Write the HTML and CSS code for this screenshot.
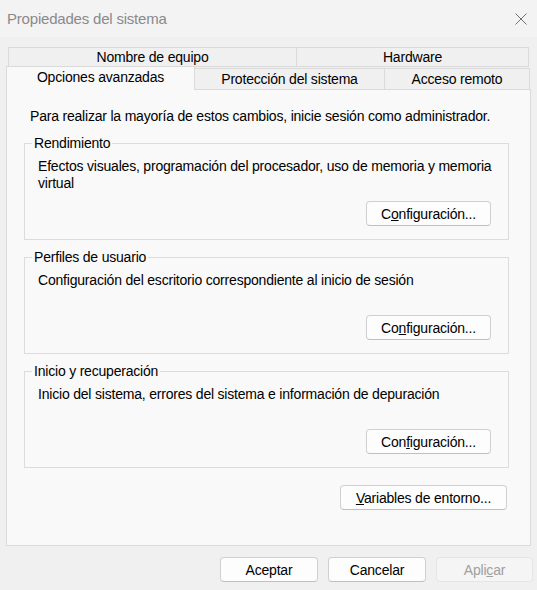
FILE: index.html
```html
<!DOCTYPE html>
<html lang="es">
<head>
<meta charset="utf-8">
<title>Propiedades del sistema</title>
<link rel="stylesheet" href="styles.css">
</head>
<body>
<div class="window">
  <div class="titlebar">
    <span class="title">Propiedades del sistema</span>
    <svg class="close" width="12" height="12" viewBox="0 0 12 12"><path d="M0.5 0.5 L11.5 11.5 M11.5 0.5 L0.5 11.5" stroke="#707070" stroke-width="1" fill="none"/></svg>
  </div>
  <div class="tabs">
    <div class="tabrow back">
      <div class="tab t-name">Nombre de equipo</div>
      <div class="tab t-hw">Hardware</div>
    </div>
    <div class="tabrow front">
      <div class="tab sel">Opciones avanzadas</div>
      <div class="tab t-prot">Protección del sistema</div>
      <div class="tab t-rem">Acceso remoto</div>
    </div>
  </div>
  <div class="panel">
    <p class="note">Para realizar la mayoría de estos cambios, inicie sesión como administrador.</p>
    <div class="group">
      <span class="legend">Rendimiento</span>
      <p class="gtext">Efectos visuales, programación del procesador, uso de memoria y memoria virtual</p>
      <button class="btn btn-cfg">C<u>o</u>nfiguración...</button>
    </div>
    <div class="group">
      <span class="legend">Perfiles de usuario</span>
      <p class="gtext">Configuración del escritorio correspondiente al inicio de sesión</p>
      <button class="btn btn-cfg">Co<u>n</u>figuración...</button>
    </div>
    <div class="group">
      <span class="legend">Inicio y recuperación</span>
      <p class="gtext">Inicio del sistema, errores del sistema e información de depuración</p>
      <button class="btn btn-cfg">Con<u>f</u>iguración...</button>
    </div>
    <button class="btn btn-env"><u>V</u>ariables de entorno...</button>
  </div>
  <div class="footer">
    <button class="btn btn-foot">Aceptar</button>
    <button class="btn btn-foot">Cancelar</button>
    <button class="btn btn-foot btn-apply" disabled>Apli<u>c</u>ar</button>
  </div>
</div>
</body>
</html>
```
FILE: styles.css
```css
* { box-sizing: border-box; }
html, body { margin: 0; padding: 0; }
body {
  width: 537px;
  height: 590px;
  overflow: hidden;
  background: #f0f0f0;
  font-family: "Liberation Sans", Arial, sans-serif;
  font-size: 14px;
  letter-spacing: -0.2px;
  color: #000;
}
.window {
  width: 537px;
  height: 590px;
  display: flex;
  flex-direction: column;
}
.titlebar {
  height: 37px;
  background: #f3f3f3;
  display: flex;
  align-items: center;
  justify-content: space-between;
  padding: 0 10px 0 7px;
}
.title {
  font-size: 15px;
  line-height: 18px;
  color: #8a8a8a;
}
.close { display: block; }
.tabs {
  margin-top: 10px;
}
.tabrow { display: flex; }
.tab {
  text-align: center;
  line-height: 18px;
  border: 1px solid #dadada;
  background: #f0f0f0;
  white-space: nowrap;
}
.back {
  margin-left: 8px;
  width: 521px;
  height: 20px;
}
.t-name { width: 289px; height: 20px; }
.t-hw { width: 233px; height: 20px; margin-left: -1px; }
.front {
  margin-left: 6px;
  margin-top: -1px;
  height: 24px;
  align-items: flex-start;
}
.sel {
  width: 189px;
  height: 24px;
  line-height: 21px;
  border-bottom: none;
  background: #f9f9f9;
  position: relative;
  z-index: 1;
}
.t-prot, .t-rem {
  margin-top: 2px;
  height: 22px;
  line-height: 21px;
  border-left: none;
  border-bottom: none;
}
.t-prot { width: 190px; }
.t-rem { width: 145px; }
.panel {
  margin-left: 6px;
  margin-top: -1px;
  width: 525px;
  height: 457px;
  border: 1px solid #dadada;
  background: #f9f9f9;
  display: flex;
  flex-direction: column;
  padding: 18px 0 0 0;
}
.note {
  margin: 0 0 0 23px;
  line-height: 17px;
}
.group {
  position: relative;
  margin: 18px 0 0 17px;
  width: 485px;
  height: 97px;
  border: 1px solid #dcdcdc;
  display: flex;
  flex-direction: column;
  padding: 14px 17px 13px 13px;
}
.group + .group { margin-top: 17px; }
.legend {
  position: absolute;
  top: -9px;
  left: 7px;
  padding: 0 2px;
  line-height: 17px;
  background: #f9f9f9;
}
.gtext {
  margin: 0 -9px 0 0;
  line-height: 17px;
}
.btn {
  font-family: "Liberation Sans", Arial, sans-serif;
  font-size: 14px;
  letter-spacing: -0.2px;
  color: #000;
  background: #fdfdfd;
  border: 1px solid #d0d0d0;
  border-bottom-color: #bfbfbf;
  border-radius: 4px;
  height: 25px;
  padding: 0;
  line-height: 22px;
  text-align: center;
}
.btn-cfg {
  margin-top: auto;
  align-self: flex-end;
  width: 125px;
}
.btn-env {
  margin: 17px 23px 0 0;
  align-self: flex-end;
  width: 167px;
}
.footer {
  margin-top: 11px;
  display: flex;
  justify-content: flex-end;
  gap: 10px;
  padding-right: 4px;
}
.btn-foot { width: 98px; }
.btn-apply {
  width: 97px;
  background: #f5f5f5;
  border-color: #e5e5e5;
  color: #a0a0a0;
}
```
